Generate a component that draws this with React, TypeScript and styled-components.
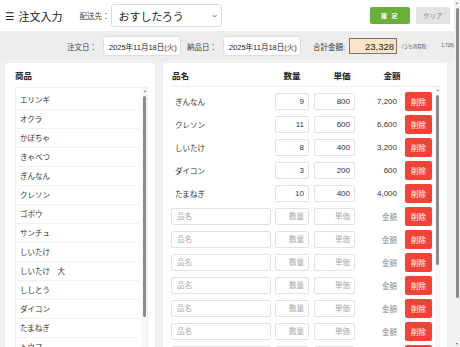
import styled, { createGlobalStyle } from "styled-components";

const GlobalStyle = createGlobalStyle`
  * {
    box-sizing: border-box;
  }

  html,
  body {
    margin: 0;
    padding: 0;
  }

  body {
    background: #f1f1f1;
    color: #333;
    font-family: "Liberation Sans", "Noto Sans CJK JP", sans-serif;
    overflow-x: hidden;
  }
`;

const Track = styled.div<{ $w: number; $bg: string }>`
  width: ${(p) => p.$w}px;
  flex-shrink: 0;
  align-self: stretch;
  display: flex;
  flex-direction: column;
  align-items: center;
  background: ${(p) => p.$bg};
`;

const Arrow = styled.div<{ $down?: boolean }>`
  height: 6px;
  display: flex;
  align-items: center;
  justify-content: center;

  &::after {
    content: "";
    width: 0;
    height: 0;
    border-left: 1.5px solid transparent;
    border-right: 1.5px solid transparent;
    ${(p) =>
      p.$down ? "border-top: 2px solid #777;" : "border-bottom: 2px solid #777;"}
  }
`;

const Thumb = styled.div<{ $w: number }>`
  width: ${(p) => p.$w}px;
  border-radius: 2px;
  background: #8b8b8b;
  flex-shrink: 0;
`;

const Spacer = styled.div`
  flex: 1;
`;

type ScrollBarProps = {
  width: number;
  thumbWidth: number;
  top: number;
  length: number;
  bg: string;
};

const ScrollBar = ({ width, thumbWidth, top, length, bg }: ScrollBarProps) => (
  <Track $w={width} $bg={bg}>
    <Arrow />
    <Thumb $w={thumbWidth} style={{ marginTop: top - 6, height: length }} />
    <Spacer />
    <Arrow $down />
  </Track>
);

const Shell = styled.div`
  display: flex;
  align-items: flex-start;
`;

const Page = styled.div`
  flex: 1;
  min-width: 0;
`;

const PageTrack = styled.div`
  height: 100vh;
  display: flex;
  position: sticky;
  top: 0;
`;

const Header = styled.header`
  height: 31px;
  background: #fff;
  display: flex;
  align-items: center;
  padding: 0 4px 0 5px;
`;

const Title = styled.h1`
  margin: 0;
  display: flex;
  align-items: center;
  gap: 4px;
  font-size: 11px;
  font-weight: normal;
  color: #222;
`;

const Burger = styled.span`
  font-family: "DejaVu Sans", sans-serif;
  font-size: 10.5px;
`;

const SmallLabel = styled.span<{ $gap?: number }>`
  font-size: 7.5px;
  color: #444;
  white-space: nowrap;
  margin-left: ${(p) => p.$gap ?? 0}px;
`;

const SelectBox = styled.div`
  width: 111px;
  height: 23px;
  margin-left: 2px;
  display: flex;
  align-items: center;
  justify-content: space-between;
  padding: 0 4px 0 6px;
  border: 1px solid #dcdcdc;
  border-radius: 3px;
  background: #fff;
  font-family: "Noto Sans CJK JP", sans-serif;
  font-size: 11px;
  color: #222;
`;

const Actions = styled.div`
  margin-left: auto;
  display: flex;
  gap: 6px;
`;

const TopButton = styled.button<{ $primary?: boolean }>`
  width: ${(p) => (p.$primary ? 40 : 34)}px;
  height: 17px;
  padding: 0;
  border: none;
  border-radius: 2px;
  background: ${(p) => (p.$primary ? "#6aae3c" : "#e2e2e2")};
  color: ${(p) => (p.$primary ? "#fff" : "#808080")};
  font-family: "Noto Sans CJK JP", sans-serif;
  font-size: 6px;
  font-weight: ${(p) => (p.$primary ? "bold" : "normal")};
  letter-spacing: ${(p) => (p.$primary ? "1.5px" : "0.5px")};
`;

const SubBar = styled.div`
  height: 30px;
  background: #ededed;
  display: flex;
  align-items: center;
  justify-content: flex-end;
`;

const DateBox = styled.input<{ $last?: boolean }>`
  width: 78px;
  height: 20px;
  margin: 0 ${(p) => (p.$last ? 0 : 6)}px 0 6px;
  padding: 0 0 0 5px;
  border: 1px solid #dedede;
  border-radius: 3px;
  background: #fff;
  font-family: inherit;
  font-size: 7.5px;
  color: #222;
  outline: none;
`;

const TotalLabel = styled.span`
  font-size: 7.5px;
  color: #333;
  margin-left: 12px;
`;

const TotalBox = styled.input`
  width: 48px;
  height: 16px;
  margin-left: 4px;
  padding: 0 2px 0 0;
  border: 1px solid #7d7468;
  background: #fde3c6;
  text-align: right;
  font-family: inherit;
  font-size: 9.5px;
  color: #222;
  outline: none;
`;

const TaxNote = styled.span`
  width: 52px;
  margin-left: 5px;
  display: flex;
  justify-content: space-between;
  font-size: 4.5px;
  color: #555;
  white-space: nowrap;
`;

const Main = styled.main`
  display: flex;
  gap: 8px;
  padding: 2px 7px 5px 5px;
`;

const Panel = styled.section<{ $width?: number }>`
  height: 325px;
  background: #fff;
  border-radius: 3px;
  box-shadow: 0 0 2px rgba(0, 0, 0, 0.05);
  display: flex;
  flex-direction: column;
  ${(p) => (p.$width ? `width: ${p.$width}px;` : "flex: 1; min-width: 0;")}
`;

const LeftPanel = styled(Panel)`
  padding: 7px 7px 7px 10px;
`;

const RightPanel = styled(Panel)`
  padding: 7px 7px 7px 8px;
`;

const PanelTitle = styled.h2`
  margin: 0 0 5px;
  font-size: 8.5px;
  line-height: 12px;
  font-weight: bold;
  color: #222;
`;

const ScrollBox = styled.div<{ $bordered?: boolean }>`
  flex: 1;
  min-height: 0;
  display: flex;
  border: ${(p) => (p.$bordered ? "1px solid #eee" : "none")};
`;

const ScrollContent = styled.div`
  flex: 1;
  min-width: 0;
  overflow: hidden;
  padding-top: 3px;
`;

const ProductItem = styled.div`
  height: 19px;
  line-height: 18px;
  margin: 0 3px 0 1px;
  padding-left: 3px;
  border-bottom: 1px solid #f1f1f1;
  font-family: "Noto Sans CJK JP", sans-serif;
  font-size: 7.5px;
  color: #333;
`;

const TableHead = styled.div`
  display: grid;
  grid-template-columns: 104px 32px 68px 32px;
  height: 17px;
  padding-left: 1px;
  border-bottom: 1px solid #eee;
  font-size: 8.5px;
  line-height: 12px;
  font-weight: bold;
  color: #222;
`;

const HeadCell = styled.div<{ $center?: boolean }>`
  text-align: ${(p) => (p.$center ? "center" : "left")};
`;

const Row = styled.div`
  display: grid;
  grid-template-columns: 104px 39px 46px 45px 27px;
  align-items: center;
  height: 23px;
`;

const NameText = styled.span`
  padding-left: 4px;
  font-size: 7.5px;
  color: #333;
`;

const CellInput = styled.input<{ $w: number; $right?: boolean }>`
  width: ${(p) => p.$w}px;
  height: 17px;
  padding: ${(p) => (p.$right ? "0 4px 0 0" : "0 0 0 5px")};
  border: 1px solid #e2e2e2;
  border-radius: 2px;
  background: #fff;
  text-align: ${(p) => (p.$right ? "right" : "left")};
  font-family: inherit;
  font-size: 8px;
  color: #333;
  outline: none;

  &::placeholder {
    color: #a8a8a8;
    font-size: 7.5px;
  }
`;

const Amount = styled.span<{ $empty?: boolean }>`
  padding-right: 8px;
  text-align: right;
  font-size: ${(p) => (p.$empty ? 7.5 : 8)}px;
  color: ${(p) => (p.$empty ? "#8a8a8a" : "#333")};
`;

const DeleteButton = styled.button`
  width: 27px;
  height: 19px;
  padding: 0;
  border: none;
  border-radius: 2px;
  background: #f44336;
  color: #fff;
  font-family: "Noto Sans CJK JP", sans-serif;
  font-size: 7.5px;
`;

const products = [
  "エリンギ",
  "オクラ",
  "かぼちゃ",
  "きゃべつ",
  "ぎんなん",
  "クレソン",
  "ゴボウ",
  "サンチュ",
  "しいたけ",
  "しいたけ　大",
  "ししとう",
  "ダイコン",
  "たまねぎ",
  "トウフ",
  "トマト",
  "なす",
  "にんじん",
  "ピーマン",
  "ブロッコリー",
  "レタス",
];

type Line = { name: string; qty: number; price: number };

const lines: Line[] = [
  { name: "ぎんなん", qty: 9, price: 800 },
  { name: "クレソン", qty: 11, price: 600 },
  { name: "しいたけ", qty: 8, price: 400 },
  { name: "ダイコン", qty: 3, price: 200 },
  { name: "たまねぎ", qty: 10, price: 400 },
];

const EMPTY_ROWS = 16;

const yen = (n: number) => n.toLocaleString("ja-JP");

const App = () => {
  const subtotal = lines.reduce((sum, l) => sum + l.qty * l.price, 0);
  const tax = Math.round(subtotal * 0.08);
  const total = subtotal + tax;

  return (
    <Shell>
      <GlobalStyle />
      <Page>
        <Header>
          <Title>
            <Burger>☰</Burger>
            注文入力
          </Title>
          <SmallLabel $gap={17}>配送先：</SmallLabel>
          <SelectBox>
            おすしたろう
            <svg width="5" height="4" viewBox="0 0 5 4">
              <polyline points="0.5,1 2.5,3 4.5,1" fill="none" stroke="#555" strokeWidth="0.9" />
            </svg>
          </SelectBox>
          <Actions>
            <TopButton $primary>確 定</TopButton>
            <TopButton>クリア</TopButton>
          </Actions>
        </Header>

        <SubBar>
          <SmallLabel>注文日：</SmallLabel>
          <DateBox readOnly value="2025年11月18日(火)" />
          <SmallLabel>納品日：</SmallLabel>
          <DateBox $last readOnly value="2025年11月18日(火)" />
          <TotalLabel>合計金額:</TotalLabel>
          <TotalBox readOnly value={yen(total)} />
          <TaxNote>
            <span>(うち消費税:</span>
            <span>{yen(tax)})</span>
          </TaxNote>
        </SubBar>

        <Main>
          <LeftPanel $width={150}>
            <PanelTitle>商品</PanelTitle>
            <ScrollBox $bordered>
              <ScrollContent>
                {products.map((p) => (
                  <ProductItem key={p}>{p}</ProductItem>
                ))}
              </ScrollContent>
              <ScrollBar width={5} thumbWidth={3} top={8} length={221} bg="#f7f7f7" />
            </ScrollBox>
          </LeftPanel>

          <RightPanel>
            <TableHead>
              <HeadCell>品名</HeadCell>
              <HeadCell $center>数量</HeadCell>
              <HeadCell $center>単価</HeadCell>
              <HeadCell $center>金額</HeadCell>
            </TableHead>
            <ScrollBox>
              <ScrollContent>
                {lines.map((l) => (
                  <Row key={l.name}>
                    <NameText>{l.name}</NameText>
                    <CellInput $w={34} $right defaultValue={l.qty} />
                    <CellInput $w={41} $right defaultValue={l.price} />
                    <Amount>{yen(l.qty * l.price)}</Amount>
                    <DeleteButton>削除</DeleteButton>
                  </Row>
                ))}
                {Array.from({ length: EMPTY_ROWS }, (_, i) => (
                  <Row key={`empty-${i}`}>
                    <CellInput $w={100} placeholder="品名" />
                    <CellInput $w={34} $right placeholder="数量" />
                    <CellInput $w={41} $right placeholder="単価" />
                    <Amount $empty>金額</Amount>
                    <DeleteButton>削除</DeleteButton>
                  </Row>
                ))}
              </ScrollContent>
              <ScrollBar width={5} thumbWidth={3} top={8} length={170} bg="#f7f7f7" />
            </ScrollBox>
          </RightPanel>
        </Main>
      </Page>
      <PageTrack>
        <ScrollBar width={6} thumbWidth={3} top={8} length={290} bg="#f1f1f1" />
      </PageTrack>
    </Shell>
  );
};

export default App;
